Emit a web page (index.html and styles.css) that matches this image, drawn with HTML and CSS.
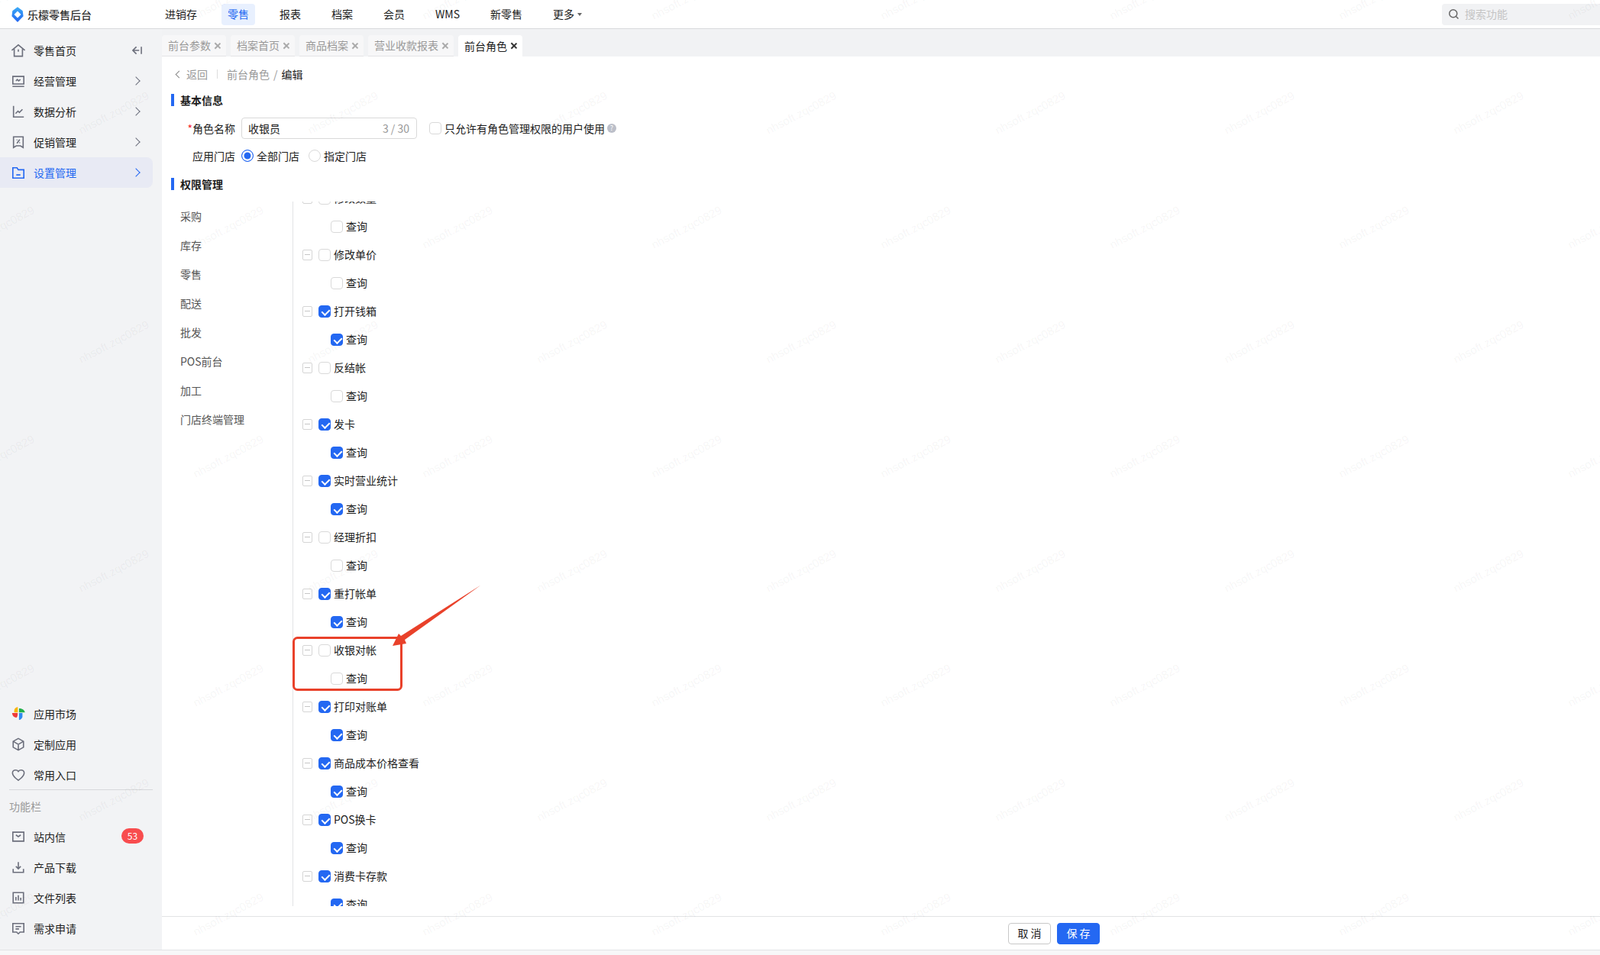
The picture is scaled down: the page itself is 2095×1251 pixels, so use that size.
FILE: index.html
```html
<!DOCTYPE html>
<html lang="zh-CN">
<head>
	<meta charset="UTF-8">
	<title>前台角色</title>
	<link rel="stylesheet" href="styles.css">
</head>
<body>
	<div class="app">
		<!-- 头部 -->
		<header class="topbar">
			<div class="logo">
				<svg width="16" height="20" viewBox="0 0 16 20">
					<defs><linearGradient id="lg" x1="0" y1="0" x2="0" y2="1"><stop offset="0" stop-color="#3aa8f6"/><stop offset="1" stop-color="#2468f2"/></linearGradient></defs>
					<path d="M8 1l6 4.500.8 6.500L8 19 1.200 12 2 5.500z" fill="url(#lg)" stroke="url(#lg)" stroke-width="1.500" stroke-linejoin="round"/>
					<path d="M8 5.500l4.500 4.500L8 14.500 3.500 10z" fill="#fff"/>
				</svg>
				<span>乐檬零售后台</span>
			</div>
			<nav class="nav">
				<a>进销存</a>
				<a class="on">零售</a>
				<a>报表</a>
				<a>档案</a>
				<a>会员</a>
				<a>WMS</a>
				<a>新零售</a>
				<a class="more">更多</a>
			</nav>
			<div class="search">
				<svg width="15" height="15" viewBox="0 0 15 15" fill="none" stroke="#666" stroke-width="1.5"><circle cx="6.8" cy="6.8" r="5"/><path d="M10.5 10.5l3 3"/></svg>
				<span>搜索功能</span>
			</div>
		</header>

		<div class="main">
			<!-- 左侧菜单 -->
			<aside class="side">
				<div class="side-group">
					<div class="side-item">
						<svg class="ico" viewBox="0 0 20 20"><path d="M.5 10L10 2l9.500 8M4 8V18.500h12V8M10 8.500v3.500"/></svg>
						<span>零售首页</span>
						<svg class="fold" viewBox="0 0 14 12"><path d="M6 1L1 6l5 5M1.500 6H10M13 1v10"/></svg>
					</div>
					<div class="side-item">
						<svg class="ico" viewBox="0 0 20 20"><path d="M2 3.500h16v11H2zM1.500 18h17M6.500 10l2-2 2 2 2.500-2"/></svg>
						<span>经营管理</span>
						<i class="arrow"></i>
					</div>
					<div class="side-item">
						<svg class="ico" viewBox="0 0 20 20"><path d="M3 2v16h15M6 13l3.500-3.500 2 2L16 7"/></svg>
						<span>数据分析</span>
						<i class="arrow"></i>
					</div>
					<div class="side-item">
						<svg class="ico" viewBox="0 0 20 20"><path d="M3 2.500h14V18l-4-2.500H7L3 18zM12 6.500l-4 5.500M7.500 7h1M11.500 11h1"/></svg>
						<span>促销管理</span>
						<i class="arrow"></i>
					</div>
					<div class="side-item active">
						<svg class="ico" viewBox="0 0 20 20"><path d="M2 3h6l2 3h8v12H2zM7 13.500h6"/></svg>
						<span>设置管理</span>
						<i class="arrow"></i>
					</div>
				</div>
				<div class="side-group">
					<div class="side-item">
						<svg class="ico ico-fill" viewBox="0 0 20 20"><path d="M9.200 8V0C6 .5 4 3 4 5.500V8z" fill="#f9b400"/><path d="M11 8V2.200c4 0 8 1.800 8.600 5.800z" fill="#22b04b"/><path d="M9 9H1c0 3 2 6.500 6 6.500 1 0 2-2.500 2-4.500z" fill="#ee3b3b"/><path d="M11 9h5v5c0 3-3 5-5 5z" fill="#2f8bf0"/></svg>
						<span>应用市场</span>
					</div>
					<div class="side-item">
						<svg class="ico" viewBox="0 0 20 20"><path d="M10 1.500l7.500 4.200v8.600L10 18.500l-7.500-4.200V5.700zM3 6l7 4.200L17 6M10 10.200V18"/></svg>
						<span>定制应用</span>
					</div>
					<div class="side-item">
						<svg class="ico" viewBox="0 0 20 20"><path d="M10 18C5 14.500 1.500 11.500 1.500 7.500 1.500 4.500 3.800 3 6 3c1.800 0 3.200.8 4 2 .8-1.200 2.200-2 4-2 2.200 0 4.500 1.500 4.500 4.500 0 4-3.500 7-8.500 10.500z"/></svg>
						<span>常用入口</span>
					</div>
					<div class="side-line"></div>
					<div class="side-title">功能栏</div>
					<div class="side-item">
						<svg class="ico" viewBox="0 0 20 20"><path d="M2 3.500h16v13H2zM6.500 7.500L10 10l3.500-2.500"/></svg>
						<span>站内信</span>
						<b class="badge">53</b>
					</div>
					<div class="side-item">
						<svg class="ico" viewBox="0 0 20 20"><path d="M10 2.500V12M6.500 8.800l3.500 3.500 3.500-3.500M2.500 12.500v5h15v-5"/></svg>
						<span>产品下载</span>
					</div>
					<div class="side-item">
						<svg class="ico" viewBox="0 0 20 20"><path d="M2.500 2.500h15v15h-15zM6.500 9v5M10 6.500V14M13.500 10v4"/></svg>
						<span>文件列表</span>
					</div>
					<div class="side-item">
						<svg class="ico" viewBox="0 0 20 20"><path d="M2 3h16v12.500h-5.500L10 18l-2.500-2.500H2zM6 7.500h8M6 11h5"/></svg>
						<span>需求申请</span>
					</div>
				</div>
			</aside>

			<div class="content">
				<!-- 标签页 -->
				<div class="tabs">
					<div class="tab">前台参数<i class="close"></i></div>
					<div class="tab">档案首页<i class="close"></i></div>
					<div class="tab">商品档案<i class="close"></i></div>
					<div class="tab">营业收款报表<i class="close"></i></div>
					<div class="tab cur">前台角色<i class="close"></i></div>
				</div>

				<div class="page">
					<div class="crumb">
						<i class="back"></i>
						<span class="grey">返回</span>
						<i class="crumb-line"></i>
						<span class="grey">前台角色</span>
						<span class="grey slash">/</span>
						<span>编辑</span>
					</div>

					<h3 class="sec">基本信息</h3>
					<div class="form-row">
						<label class="lab"><em>*</em>角色名称</label>
						<div class="input">
							<input type="text" value="收银员">
							<span>3 / 30</span>
						</div>
						<span class="ck ck-only"></span>
						<span>只允许有角色管理权限的用户使用</span>
						<i class="help">?</i>
					</div>
					<div class="form-row row2">
						<label class="lab">应用门店</label>
						<span class="radio on"></span>
						<span class="radio-text">全部门店</span>
						<span class="radio"></span>
						<span>指定门店</span>
					</div>

					<h3 class="sec sec2">权限管理</h3>
					<div class="perm">
						<ul class="perm-menu">
							<li>采购</li>
							<li>库存</li>
							<li>零售</li>
							<li>配送</li>
							<li>批发</li>
							<li>POS前台</li>
							<li>加工</li>
							<li>门店终端管理</li>
						</ul>
						<div class="tree">
							<div class="tree-inner">
								<div class="node"><i class="minus"></i><span class="ck"></span>修改数量</div>
								<div class="leaf"><span class="ck"></span>查询</div>
								<div class="node"><i class="minus"></i><span class="ck"></span>修改单价</div>
								<div class="leaf"><span class="ck"></span>查询</div>
								<div class="node"><i class="minus"></i><span class="ck on"></span>打开钱箱</div>
								<div class="leaf"><span class="ck on"></span>查询</div>
								<div class="node"><i class="minus"></i><span class="ck"></span>反结帐</div>
								<div class="leaf"><span class="ck"></span>查询</div>
								<div class="node"><i class="minus"></i><span class="ck on"></span>发卡</div>
								<div class="leaf"><span class="ck on"></span>查询</div>
								<div class="node"><i class="minus"></i><span class="ck on"></span>实时营业统计</div>
								<div class="leaf"><span class="ck on"></span>查询</div>
								<div class="node"><i class="minus"></i><span class="ck"></span>经理折扣</div>
								<div class="leaf"><span class="ck"></span>查询</div>
								<div class="node"><i class="minus"></i><span class="ck on"></span>重打帐单</div>
								<div class="leaf"><span class="ck on"></span>查询</div>
								<div class="node"><i class="minus"></i><span class="ck"></span>收银对帐</div>
								<div class="leaf"><span class="ck"></span>查询</div>
								<div class="node"><i class="minus"></i><span class="ck on"></span>打印对账单</div>
								<div class="leaf"><span class="ck on"></span>查询</div>
								<div class="node"><i class="minus"></i><span class="ck on"></span>商品成本价格查看</div>
								<div class="leaf"><span class="ck on"></span>查询</div>
								<div class="node"><i class="minus"></i><span class="ck on"></span>POS换卡</div>
								<div class="leaf"><span class="ck on"></span>查询</div>
								<div class="node"><i class="minus"></i><span class="ck on"></span>消费卡存款</div>
								<div class="leaf"><span class="ck on"></span>查询</div>
							</div>
						</div>
					</div>
				</div>

				<!-- 底部按钮 -->
				<div class="foot">
					<button class="btn">取 消</button>
					<button class="btn primary">保 存</button>
				</div>
			</div>
		</div>
		<div class="strip"></div>

		<!-- 截图上的红色标注 -->
		<svg class="mark" width="300" height="200" viewBox="0 0 300 200">
			<rect x="14.500" y="85.500" width="141" height="68" rx="5" fill="none" stroke="#e9412a" stroke-width="3"/>
			<polygon points="259.500,16.500 160,88 162,93 144,96 152,80 155,83" fill="#e9412a"/>
		</svg>
		<div class="wm" id="wm"></div>
	</div>
	<script src="watermark.js"></script>
</body>
</html>
```

FILE: styles.css
```css
*{
	margin:0;
	padding:0;
	box-sizing:border-box;
}
ul{
	list-style:none;
}
html,body{
	height:100%;
	overflow:hidden;
}
body{
	font-family:"Noto Sans CJK SC","Liberation Sans",sans-serif;
	font-size:14px;
	line-height:20px;
	color:#1c1c1c;
	background:#fff;
}
.app{
	position:relative;
	height:1251px;
	display:flex;
	flex-direction:column;
	overflow:hidden;
}

/* 头部 */
.topbar{
	height:38px;
	flex:none;
	display:flex;
	align-items:center;
	border-bottom:1px solid #d9dadc;
	background:#fff;
}
.logo{
	width:208px;
	padding-left:15px;
	display:flex;
	align-items:center;
	gap:5px;
	font-weight:500;
	color:#333;
}
.nav{
	display:flex;
	gap:24px;
	flex:1;
}
.nav a{
	height:28px;
	line-height:26px;
	padding:0 8px;
	border-radius:4px;
}
.nav a.on{
	background:#e8f0fe;
	color:#2468f2;
}
.nav a.more::after{
	content:"";
	display:inline-block;
	margin-left:4px;
	vertical-align:3px;
	border:3.500px solid transparent;
	border-top:4px solid #666;
	border-bottom:0;
}
.search{
	width:207px;
	height:28px;
	padding-left:8px;
	display:flex;
	align-items:center;
	gap:7px;
	background:#f1f2f4;
	border-radius:4px 0 0 4px;
	color:#c4c4c4;
}
.search span{
	margin-top:-2px;
}

.main{
	flex:1;
	min-height:0;
	display:flex;
	border-bottom:1px solid #e2e3e5;
}

/* 左侧菜单 */
.side{
	width:212px;
	flex:none;
	background:#f2f3f5;
	padding:8px 12px 8px 0;
	display:flex;
	flex-direction:column;
	justify-content:space-between;
}
.side-item{
	height:40px;
	padding-left:15px;
	display:flex;
	align-items:center;
	position:relative;
	border-radius:0 8px 8px 0;
}
.side-item span{
	margin-left:11px;
}
.side-item.active{
	background:#e8eaf4;
	color:#2468f2;
}
.ico{
	width:18px;
	height:18px;
	flex:none;
	fill:none;
	stroke:#6c6f7c;
	stroke-width:1.800;
}
.ico-fill{
	stroke:none;
}
.active .ico{
	stroke:#2468f2;
}
.fold{
	width:13px;
	height:12px;
	margin-left:auto;
	margin-right:14px;
	fill:none;
	stroke:#6c6f7c;
	stroke-width:1.700;
}
.arrow{
	width:8px;
	height:8px;
	margin-left:auto;
	margin-right:18px;
	border-top:1.500px solid #6c6f7c;
	border-right:1.500px solid #6c6f7c;
	transform:rotate(45deg);
}
.active .arrow{
	border-color:#2468f2;
}
.side-line{
	height:1px;
	margin:-1px 0 0 12px;
	background:#d7d8db;
}
.side-title{
	height:41px;
	line-height:43px;
	padding-left:12px;
	color:#999;
}
.badge{
	position:absolute;
	left:159px;
	top:9px;
	width:29px;
	height:20px;
	line-height:20px;
	border-radius:10px;
	background:#f84c4e;
	color:#fff;
	font-weight:400;
	font-size:12px;
	text-align:center;
}

.content{
	flex:1;
	min-width:0;
	display:flex;
	flex-direction:column;
}

/* 标签页 */
.tabs{
	height:36px;
	flex:none;
	padding-top:8px;
	display:flex;
	gap:6px;
	background:#f1f2f4;
}
.tab{
	height:28px;
	line-height:27px;
	padding:0 7px 0 8px;
	display:flex;
	align-items:center;
	gap:5px;
	background:#f7f7f8;
	border-bottom:1px solid #e3e3e5;
	border-radius:4px 4px 0 0;
	color:#999;
}
.tab.cur{
	background:#fff;
	border-bottom:0;
	color:#1c1c1c;
}
.close{
	position:relative;
	width:8px;
	height:8px;
}
.close::before,.close::after{
	content:"";
	position:absolute;
	left:3px;
	top:-1px;
	width:1.500px;
	height:10px;
	background:#aaa;
	transform:rotate(45deg);
}
.close::after{
	transform:rotate(-45deg);
}
.cur .close::before,.cur .close::after{
	background:#333;
}

/* 主体 */
.page{
	flex:1;
	min-height:0;
	padding:13px 0 0 12px;
}
.grey{
	color:#999;
}
.crumb{
	height:20px;
	padding-left:8px;
	display:flex;
	align-items:center;
}
.back{
	width:7px;
	height:7px;
	margin-right:6px;
	margin-left:-1px;
	border-left:1.500px solid #888;
	border-bottom:1.500px solid #888;
	transform:rotate(45deg);
}
.crumb-line{
	width:1px;
	height:12px;
	margin:0 12px;
	background:#ddd;
}
.slash{
	margin:0 5px;
}
.sec{
	height:16px;
	line-height:16px;
	margin-top:16px;
	padding-left:8px;
	border-left:4px solid #2468f2;
	font-size:14px;
	font-weight:700;
}
.sec2{
	margin-top:15px;
}
.form-row{
	height:28px;
	margin-top:15px;
	display:flex;
	align-items:center;
}
.row2{
	margin-top:8px;
}
.lab{
	width:84px;
	margin-right:8px;
	text-align:right;
}
.lab em{
	color:#f5222d;
	font-style:normal;
}
.input{
	width:230px;
	height:28px;
	margin-right:16px;
	padding:0 9px 0 8px;
	display:flex;
	align-items:center;
	border:1px solid #d9d9d9;
	border-radius:4px;
}
.input input{
	flex:1;
	min-width:0;
	border:0;
	outline:0;
	background:none;
	font:inherit;
	color:inherit;
}
.input span{
	color:#999;
}
.help{
	width:12px;
	height:12px;
	margin-left:3px;
	border-radius:50%;
	background:#bcbfc9;
	color:#fff;
	font-size:9px;
	line-height:12px;
	font-style:normal;
	text-align:center;
}
.radio{
	width:16px;
	height:16px;
	margin-right:4px;
	border:1px solid #d9d9d9;
	border-radius:50%;
	background:#fff;
}
.radio.on{
	border:1.500px solid #2468f2;
	box-shadow:inset 0 0 0 2.500px #fff;
	background:#2468f2;
}
.radio-text{
	margin-right:12px;
}

/* 复选框 */
.ck{
	position:relative;
	display:inline-block;
	width:16px;
	height:16px;
	flex:none;
	border:1px solid #d9d9d9;
	border-radius:4px;
	background:#fff;
}
.ck.on{
	background:#2468f2;
	border-color:#2468f2;
}
.ck.on::after{
	content:"";
	position:absolute;
	left:4.500px;
	top:2px;
	width:5px;
	height:8px;
	border-right:2px solid #fff;
	border-bottom:2px solid #fff;
	transform:rotate(45deg);
}
.ck-only{
	margin-right:4px;
}

/* 权限 */
.perm{
	margin-top:15px;
	height:923px;
	display:flex;
}
.perm-menu{
	width:159px;
	padding-left:12px;
	color:#555;
}
.perm-menu li{
	height:38px;
	line-height:38px;
}
.tree{
	flex:1;
	border-left:1px solid #e2e3e5;
	overflow:hidden;
}
.tree-inner{
	margin-top:-23px;
	padding-left:12px;
}
/* 文字比框高1px,底部留2px把文字提上去 */
.node,.leaf{
	height:37px;
	padding-bottom:2px;
	display:flex;
	align-items:center;
}
.node .ck,.leaf .ck{
	margin-top:2px;
	margin-right:4px;
}
.leaf{
	padding-left:37px;
}
.minus{
	position:relative;
	width:13px;
	height:14px;
	margin-top:2px;
	margin-right:8px;
	border:1px solid #d5d5d5;
	border-radius:2px;
}
.minus::after{
	content:"";
	position:absolute;
	left:2px;
	right:2px;
	top:5px;
	height:1px;
	background:#c6c6c6;
}

/* 底部 */
.foot{
	height:44px;
	flex:none;
	padding-right:655px;
	display:flex;
	align-items:center;
	justify-content:flex-end;
	gap:8px;
	border-top:1px solid #e2e3e5;
}
.btn{
	width:56px;
	height:28px;
	padding-bottom:2px;
	border:1px solid #c8c8c8;
	border-radius:4px;
	background:#fff;
	font:inherit;
	color:#1c1c1c;
}
.btn.primary{
	background:#2468f2;
	border-color:#2468f2;
	color:#fff;
}
.strip{
	height:6px;
	flex:none;
	background:#f7f7f8;
}

/* 标注和水印,压在内容上面 */
.mark{
	position:absolute;
	left:370px;
	top:750px;
}
.wm{
	position:absolute;
	left:0;
	top:-77px;
	pointer-events:none;
}
.wm-row{
	display:flex;
	height:150px;
	margin-left:-1px;
}
.wm-row.odd{
	margin-left:-151px;
}
.wm-row span{
	width:300px;
	flex:none;
	line-height:150px;
	text-align:center;
	font-family:"Liberation Sans",sans-serif;
	font-size:15px;
	color:rgba(0,0,0,.05);
	transform:rotate(-28deg);
}
```

FILE: watermark.js
```js
// 水印,每行错开半格
var wm=document.getElementById("wm");
for(var i=0;i<9;i++){
	var row=document.createElement("div");
	row.className=i%2==0?"wm-row odd":"wm-row";
	for(var j=0;j<9;j++){
		var s=document.createElement("span");
		s.innerHTML="nhsoft.zqc0829";
		row.appendChild(s);
	}
	wm.appendChild(row);
}
```
